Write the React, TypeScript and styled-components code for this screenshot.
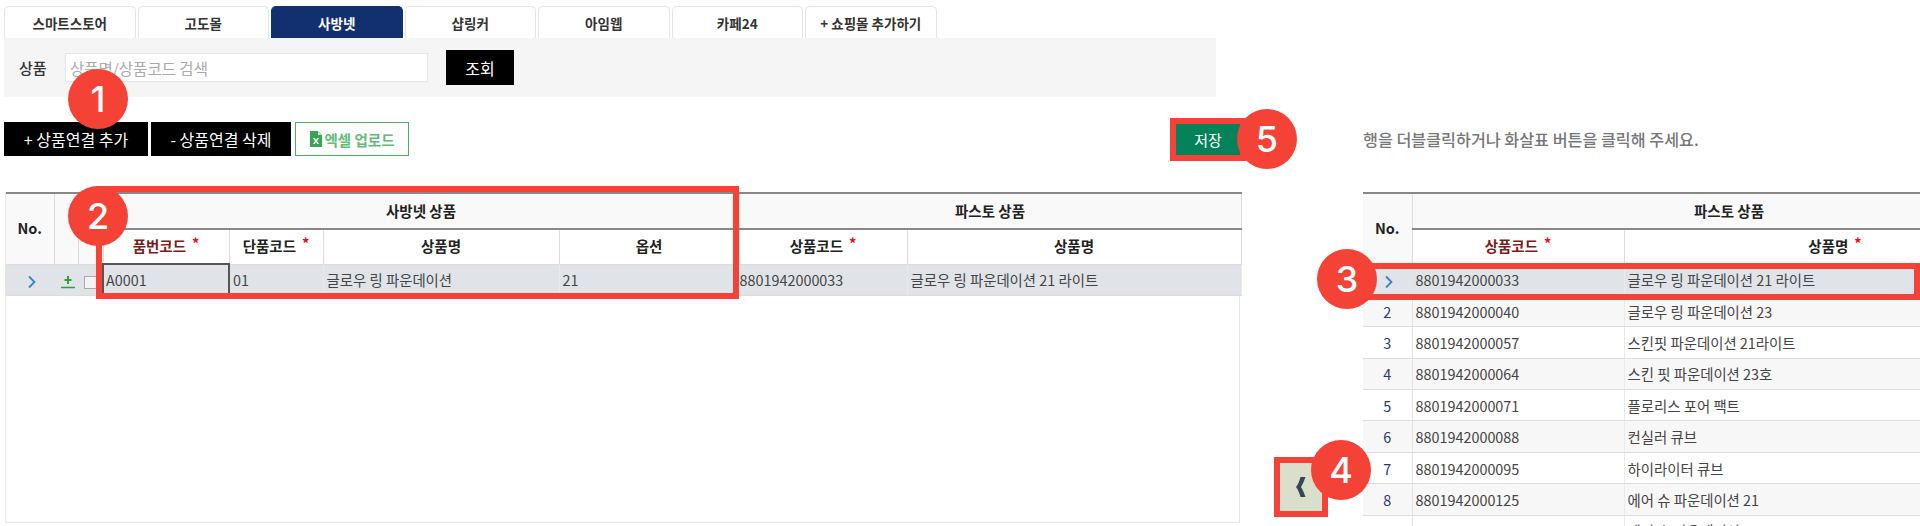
import React from 'react';
import styled, { createGlobalStyle } from 'styled-components';

const GlobalStyle = createGlobalStyle`
  html, body { margin: 0; padding: 0; height: 526px; overflow: hidden; background: #fff; }
  * { box-sizing: border-box; }
  body { font-family: "Noto Sans CJK KR", "Noto Sans", sans-serif; font-size: 14px; color: #444; }
`;

const TABS = ['스마트스토어', '고도몰', '사방넷', '샵링커', '아임웹', '카페24', '+ 쇼핑몰 추가하기'];

const RIGHT_ROWS = [
  ['8801942000033', '글로우 링 파운데이션 21 라이트'],
  ['8801942000040', '글로우 링 파운데이션 23'],
  ['8801942000057', '스킨핏 파운데이션 21라이트'],
  ['8801942000064', '스킨 핏 파운데이션 23호'],
  ['8801942000071', '플로리스 포어 팩트'],
  ['8801942000088', '컨실러 큐브'],
  ['8801942000095', '하이라이터 큐브'],
  ['8801942000125', '에어 슈 파운데이션 21'],
  ['8801942000132', '에어 슈 파운데이션 23'],
];

export default function App() {
  return (
    <Page>
      <GlobalStyle />
      <TabBar>
        {TABS.map((t, i) => (
          <Tab key={t} $active={i === 2}>{t}</Tab>
        ))}
      </TabBar>
      <SearchPanel>
        <SearchLabel>상품</SearchLabel>
        <SearchInput placeholder="상품명/상품코드 검색" />
        <BlackButton $w={68} $h={35}>조회</BlackButton>
      </SearchPanel>

      <Toolbar>
        <ToolLeft>
          <BlackButton $w={144} $h={34}>+ 상품연결 추가</BlackButton>
          <BlackButton $w={140} $h={34}>- 상품연결 삭제</BlackButton>
          <ExcelButton>
            <svg width="12" height="16" viewBox="0 0 12 16">
              <path d="M0 0h8l4 4v12H0z" fill="#3aa655" />
              <path d="M8 0v4h4z" fill="#bfe5c8" />
              <path d="M3 7l2 3-2 3h1.600L6 11l1.400 2H9L7 10l2-3H7.400L6 9 4.600 7z" fill="#fff" />
            </svg>
            엑셀 업로드
          </ExcelButton>
        </ToolLeft>
        <SaveButton>저장</SaveButton>
        <Hint>행을 더블클릭하거나 화살표 버튼을 클릭해 주세요.</Hint>
      </Toolbar>

      <Grids>
        <LeftPane>
          <Table $w={1235}>
            <colgroup>
              <Col $w={48} /><Col $w={24} /><Col $w={25} /><Col $w={126} /><Col $w={94} />
              <Col $w={236} /><Col $w={180} /><Col $w={168} /><Col $w={334} />
            </colgroup>
            <thead>
              <tr>
                <GroupTh rowSpan={2}>No.</GroupTh>
                <GroupTh rowSpan={2} />
                <GroupTh rowSpan={2} />
                <GroupTh colSpan={4}>사방넷 상품</GroupTh>
                <GroupTh colSpan={2}>파스토 상품</GroupTh>
              </tr>
              <tr>
                <SubTh $required>품번코드<Star>*</Star></SubTh>
                <SubTh>단품코드<Star>*</Star></SubTh>
                <SubTh>상품명</SubTh>
                <SubTh>옵션</SubTh>
                <SubTh>상품코드<Star>*</Star></SubTh>
                <SubTh>상품명</SubTh>
              </tr>
            </thead>
            <tbody>
              <Row $selected>
                <NoCell><RowChevron /></NoCell>
                <NoCell>
                  <svg width="14" height="14" viewBox="0 0 14 14">
                    <path d="M7 1v8M3.500 5h7" stroke="#2e9e3f" strokeWidth="2" fill="none" />
                    <path d="M0 12.500h14" stroke="#2e9e3f" strokeWidth="1.500" />
                  </svg>
                </NoCell>
                <NoCell><CheckBox /></NoCell>
                <Cell $focused>A0001</Cell>
                <Cell>01</Cell>
                <Cell>글로우 링 파운데이션</Cell>
                <Cell>21</Cell>
                <Cell $flush>8801942000033</Cell>
                <Cell>글로우 링 파운데이션 21 라이트</Cell>
              </Row>
            </tbody>
          </Table>
        </LeftPane>

        <Gutter>
          <MoveButton>
            <svg width="10" height="20" viewBox="0 0 10 20">
              <path d="M9.500 0H4.500C3 5 1.800 8 0 10c1.800 2 3 5 4.500 10h5C7.800 15 6.500 12.500 5 10c1.500-2.500 2.800-5 4.500-10z" fill="#36465a" />
            </svg>
          </MoveButton>
        </Gutter>

        <RightPane>
          <Table $w={683}>
            <colgroup>
              <Col $w={49} /><Col $w={212} /><Col $w={422} />
            </colgroup>
            <thead>
              <tr>
                <GroupTh rowSpan={2}>No.</GroupTh>
                <GroupTh colSpan={2}>파스토 상품</GroupTh>
              </tr>
              <tr>
                <SubTh $required>상품코드<Star>*</Star></SubTh>
                <SubTh>상품명<Star>*</Star></SubTh>
              </tr>
            </thead>
            <tbody>
              {RIGHT_ROWS.map((r, i) => (
                <Row key={r[0]} $selected={i === 0} $striped={i % 2 === 1}>
                  <NoCell>{i === 0 ? <RowChevron /> : i + 1}</NoCell>
                  <Cell $underline={i === 0}>{r[0]}</Cell>
                  <Cell $underline={i === 0}>{r[1]}</Cell>
                </Row>
              ))}
            </tbody>
          </Table>
        </RightPane>
      </Grids>

      <Footnote>상품연결 정보</Footnote>

      <RedBox $x={96} $y={186} $w={643} $h={113} />
      <RedBox $x={1360} $y={263} $w={560} $h={37} />
      <Badge $x={98} $y={99}>1</Badge>
      <Badge $x={98} $y={216}>2</Badge>
      <Badge $x={1347} $y={279}>3</Badge>
      <Badge $x={1341} $y={470}>4</Badge>
      <Badge $x={1267} $y={139}>5</Badge>
    </Page>
  );
}

function RowChevron() {
  return (
    <svg width="10" height="14" viewBox="0 0 10 14">
      <path d="M2 1.500L7.500 7 2 12.500" stroke="#3b7fcf" strokeWidth="1.800" fill="none" />
    </svg>
  );
}

const Page = styled.div`
  position: relative;
  width: 1920px;
  height: 526px;
  overflow: hidden;
  padding: 6px 0 0 4px;
`;

const TabBar = styled.div`
  display: flex;
  gap: 2px;
`;

const Tab = styled.div<{ $active?: boolean }>`
  width: 131.500px;
  height: 32px;
  display: flex;
  align-items: center;
  justify-content: center;
  border: 1px solid ${p => (p.$active ? '#12306f' : '#e4e4e4')};
  border-bottom: none;
  border-radius: 5px 5px 0 0;
  background: ${p => (p.$active ? '#12306f' : '#fff')};
  color: ${p => (p.$active ? '#fff' : '#333')};
  font-size: 13.500px;
  font-weight: 700;
`;

const SearchPanel = styled.div`
  width: 1212px;
  height: 59px;
  background: #f5f5f5;
  display: flex;
  align-items: center;
  padding-left: 15px;
`;

const SearchLabel = styled.span`
  width: 46px;
  font-size: 15px;
  font-weight: 500;
  color: #333;
`;

const SearchInput = styled.input`
  width: 363px;
  height: 29px;
  border: 1px solid #e6e6e6;
  background: #fff;
  padding: 0 4px;
  margin-right: 18px;
  font: inherit;
  font-size: 15.500px;
  &::placeholder { color: #aaa; }
`;

const BlackButton = styled.button<{ $w: number; $h: number }>`
  width: ${p => p.$w}px;
  height: ${p => p.$h}px;
  border: none;
  background: #000;
  color: #fff;
  font: inherit;
  font-size: 16px;
  padding: 0;
`;

const Toolbar = styled.div`
  display: flex;
  align-items: center;
  height: 34px;
  margin-top: 25px;
`;

const ToolLeft = styled.div`
  display: flex;
  gap: 3px;
  width: 1172px;
`;

const ExcelButton = styled.button`
  width: 114px;
  height: 34px;
  margin-left: 1px;
  display: flex;
  align-items: center;
  justify-content: center;
  gap: 3px;
  border: 1px solid #4caf62;
  background: #fff;
  color: #62bb78;
  font: inherit;
  font-size: 14.500px;
  font-weight: 700;
  padding: 0;
`;

const SaveButton = styled.button`
  width: 64px;
  height: 31px;
  border: none;
  outline: 6px solid #f44336;
  background: #04835a;
  color: #fff;
  font: inherit;
  font-size: 15px;
  padding: 0;
`;

const Hint = styled.div`
  margin-left: 123px;
  font-size: 16.200px;
  font-weight: 500;
  color: #777;
  white-space: nowrap;
`;

const Grids = styled.div`
  display: flex;
  margin-top: 36px;
  padding-left: 1px;
`;

const LeftPane = styled.div`
  width: 1235px;
  height: 331px;
  flex: none;
  border-left: 1px solid #e6e6e6;
  border-right: 1px solid #e6e6e6;
  border-bottom: 1px solid #e6e6e6;
`;

const Gutter = styled.div`
  width: 123px;
  flex: none;
  padding: 271px 0 0 40px;
`;

const MoveButton = styled.button`
  width: 42px;
  height: 48px;
  border: none;
  outline: 6px solid #f44336;
  background: #d9dfcb;
  display: flex;
  align-items: center;
  justify-content: center;
  padding: 0;
`;

const RightPane = styled.div`
  flex: none;
  width: 683px;
`;

const Table = styled.table<{ $w: number }>`
  width: ${p => p.$w}px;
  table-layout: fixed;
  border-collapse: collapse;
`;

const Col = styled.col<{ $w: number }>`
  width: ${p => p.$w}px;
`;

const GroupTh = styled.th`
  height: 36px;
  padding: 0 0 2px;
  background: #f9f9f9;
  border-top: 2px solid #888;
  border-right: 1px solid #ddd;
  border-bottom: 1px solid #ddd;
  font-size: 14.500px;
  font-weight: 700;
  color: #222;
`;

const SubTh = styled.th<{ $required?: boolean }>`
  height: 35px;
  padding: 0 0 2px;
  background: #fff;
  border-top: 2px solid #888;
  border-right: 1px solid #ddd;
  border-bottom: 1px solid #ddd;
  font-size: 14.500px;
  font-weight: 700;
  color: ${p => (p.$required ? '#7a1c1c' : '#222')};
`;

const Star = styled.span`
  display: inline-block;
  margin-left: 6px;
  color: #e01515;
  position: relative;
  top: -3px;
`;

const Row = styled.tr<{ $selected?: boolean; $striped?: boolean }>`
  height: 31.400px;
  background: ${p => (p.$selected ? '#e0e4e8' : p.$striped ? '#f7f7f7' : '#fff')};
`;

const NoCell = styled.td`
  padding: 0;
  text-align: center;
  border-right: 1px solid #e2e2e2;
  border-bottom: 1px solid #ddd;
  color: #1d3c6e;
  font-size: 14.400px;
  svg { display: inline-block; vertical-align: middle; margin-left: 4px; }
`;

const Cell = styled.td<{ $focused?: boolean; $underline?: boolean; $flush?: boolean }>`
  padding: 0 ${p => (p.$focused ? 2 : 4)}px 0 ${p => (p.$flush ? 0 : p.$focused ? 2 : 3)}px;
  white-space: nowrap;
  overflow: hidden;
  color: #444;
  font-size: 14.400px;
  border-right: ${p => (p.$focused ? '2px solid #555' : '1px solid #eaeaea')};
  border-bottom: ${p => (p.$focused || p.$underline ? '2px solid #555' : '1px solid #ddd')};
  border-left: ${p => (p.$focused ? '2px solid #555' : 'none')};
  border-top: ${p => (p.$focused ? '2px solid #555' : 'none')};
`;

const CheckBox = styled.span`
  display: inline-block;
  width: 13px;
  height: 13px;
  vertical-align: middle;
  border: 1px solid #aaa;
  background: #f4f4f4;
`;

const Footnote = styled.div`
  margin: 0 0 0 20px;
  font-size: 14px;
  line-height: 14px;
  font-weight: 700;
  color: #555;
`;

const RedBox = styled.div<{ $x: number; $y: number; $w: number; $h: number }>`
  position: absolute;
  left: ${p => p.$x}px;
  top: ${p => p.$y}px;
  width: ${p => p.$w}px;
  height: ${p => p.$h}px;
  border: 6px solid #f44336;
`;

const Badge = styled.div<{ $x: number; $y: number }>`
  position: absolute;
  left: ${p => p.$x - 30}px;
  top: ${p => p.$y - 30}px;
  width: 60px;
  height: 60px;
  border-radius: 50%;
  background: #f44336;
  color: #fff;
  font-family: "Inter", "Noto Sans", sans-serif;
  font-size: 36px;
  font-weight: 500;
  display: flex;
  align-items: center;
  justify-content: center;
`;
